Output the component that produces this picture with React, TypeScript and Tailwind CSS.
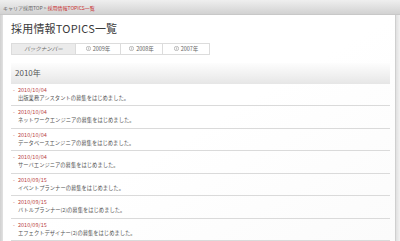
import React from "react";

const items = [
  { date: "2010/10/04", text: "出版業務アシスタントの募集をはじめました。" },
  { date: "2010/10/04", text: "ネットワークエンジニアの募集をはじめました。" },
  { date: "2010/10/04", text: "データベースエンジニアの募集をはじめました。" },
  { date: "2010/10/04", text: "サーバエンジニアの募集をはじめました。" },
  { date: "2010/09/15", text: "イベントプランナーの募集をはじめました。" },
  { date: "2010/09/15", text: "バトルプランナー(2)の募集をはじめました。" },
  { date: "2010/09/15", text: "エフェクトデザイナー(2)の募集をはじめました。" },
];

function CircleArrow() {
  return (
    <svg width="5" height="5" viewBox="0 0 10 10" className="shrink-0">
      <circle cx="5" cy="5" r="4.3" fill="none" stroke="#888" strokeWidth="1.1" />
      <path d="M4 3 L6.2 5 L4 7" fill="none" stroke="#888" strokeWidth="1.2" />
    </svg>
  );
}

export default function App() {
  const font = { fontFamily: '"Noto Sans CJK JP", "Noto Sans", sans-serif' };
  return (
    <div
      className="w-[400px] h-[241px] overflow-hidden flex flex-col bg-[#dcdcdc]"
      style={font}
    >
      <div className="h-[15px] shrink-0 bg-gradient-to-b from-[#efefef] to-[#d2d2d2] border-b border-[#c8c8c8] flex items-center pl-[3px] text-[5px] leading-none">
        <span className="text-[#666]">キャリア採用TOP</span>
        <span className="text-[#666] mx-[1px]">&gt;</span>
        <span className="text-[#c83030]">採用情報TOPICS一覧</span>
      </div>
      <div className="flex flex-1 min-h-0">
        <div className="w-[3px] shrink-0 bg-gradient-to-r from-[#d0d0d0] to-[#e2e2e2]" />
        <div className="flex-1 bg-white flex flex-col pl-[8px] pr-[5px] min-w-0 bg-gradient-to-br from-white via-white to-[#fbfbfb]">
          <h1 className="mt-[6px] text-[11px] leading-[14px] text-[#3a3a3a] font-normal tracking-[0.2px]">
            採用情報TOPICS一覧
          </h1>
          <div className="mt-[8px] flex h-[13px] w-[199px] border border-[#dcdcdc] text-[5.5px] text-[#666]">
            <div className="w-[64px] bg-[#ebebeb] flex items-center justify-center border-r border-[#dcdcdc] italic">
              バックナンバー
            </div>
            <div className="w-[45px] flex items-center justify-center gap-[2px] border-r border-[#dcdcdc]">
              <CircleArrow />
              <span>2009年</span>
            </div>
            <div className="w-[42px] flex items-center justify-center gap-[2px] border-r border-[#dcdcdc]">
              <CircleArrow />
              <span>2008年</span>
            </div>
            <div className="flex-1 flex items-center justify-center gap-[2px]">
              <CircleArrow />
              <span>2007年</span>
            </div>
          </div>
          <div className="mt-[8px] h-[21px] shrink-0 flex items-center pl-[4px] text-[8px] text-[#555] bg-gradient-to-b from-[#fdfdfd] via-[#f2f2f2] to-[#e6e6e6]">
            2010年
          </div>
          <div className="flex flex-col">
            {items.map((it, i) => (
              <div
                key={i}
                className="pt-[3px] pb-[3.5px] border-b border-[#dadada] pl-[2px]"
              >
                <div className="flex items-center leading-[7px] text-[5.5px] text-[#b94444]">
                  <span className="w-[5px] text-[#c86060]">-</span>
                  <span>{it.date}</span>
                </div>
                <div className="pl-[5px] leading-[8px] text-[5.3px] text-[#555] whitespace-nowrap">
                  {it.text}
                </div>
              </div>
            ))}
          </div>
        </div>
        <div className="w-[5px] shrink-0 border-l border-[#cfcfcf] bg-gradient-to-r from-[#e0e0e0] to-[#f2f2f2]" />
      </div>
    </div>
  );
}
